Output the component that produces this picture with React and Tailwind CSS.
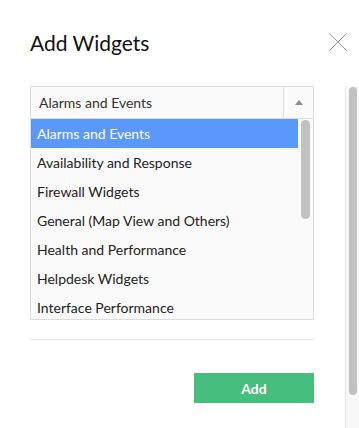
import React from "react";

const items = [
  "Alarms and Events",
  "Availability and Response",
  "Firewall Widgets",
  "General (Map View and Others)",
  "Health and Performance",
  "Helpdesk Widgets",
  "Interface Performance",
];

export default function App() {
  return (
    <div className="w-[359px] h-[428px] bg-white overflow-hidden flex flex-col" style={{ fontFamily: "Lato, 'Open Sans', sans-serif" }}>
      <div className="h-[86px] flex items-start justify-between pl-[30px] pr-[12px]">
        <h1 className="mt-[29px] text-[21px] leading-[28px] text-[#111] font-normal">Add Widgets</h1>
        <svg className="mt-[33px]" width="18" height="18" viewBox="0 0 18 18">
          <path d="M0.5 0.5 L17.5 17.5 M17.5 0.5 L0.5 17.5" stroke="#999" strokeWidth="1" fill="none" />
        </svg>
      </div>
      <div className="flex flex-1 min-h-0">
        <div className="w-[345px] pl-[30px] pr-[31px] flex flex-col">
          <div className="h-[33px] border border-[#dcdcdc] bg-[#fafafa] flex">
            <div className="flex-1 pl-[8px] flex items-center text-[14px] text-[#333]">Alarms and Events</div>
            <div className="w-[30px] border-l border-[#dcdcdc] flex items-center justify-center">
              <svg width="8" height="5" viewBox="0 0 8 5"><path d="M4 0 L8 5 L0 5 Z" fill="#8a8a8a" /></svg>
            </div>
          </div>
          <div className="h-[201px] border border-t-0 border-[#dcdcdc] bg-[#fafafa] flex overflow-hidden">
            <div className="flex-1 flex flex-col">
              {items.map((t, i) => (
                <div
                  key={t}
                  className={
                    "h-[29px] shrink-0 pl-[6px] flex items-center text-[14px] " +
                    (i === 0 ? "bg-[#5b98fb] text-white" : "text-[#222]")
                  }
                >
                  {t}
                </div>
              ))}
            </div>
            <div className="w-[15px] pl-[3px] pt-[1px]">
              <div className="w-[9px] h-[99px] rounded-full bg-[#c1c1c1]" />
            </div>
          </div>
          <div className="mt-[19px] h-px bg-[#e8e8e8]" />
          <div className="mt-[33px] flex justify-end">
            <button className="w-[120px] h-[30px] bg-[#46be7d] text-white text-[14px] font-bold">Add</button>
          </div>
        </div>
        <div className="w-[14px] bg-[#f8f8f8] border-l border-[#e6e6e6] pl-[3px] pt-[1px]">
          <div className="w-[8px] h-[308px] rounded-full bg-[#c1c1c1]" />
        </div>
      </div>
    </div>
  );
}
